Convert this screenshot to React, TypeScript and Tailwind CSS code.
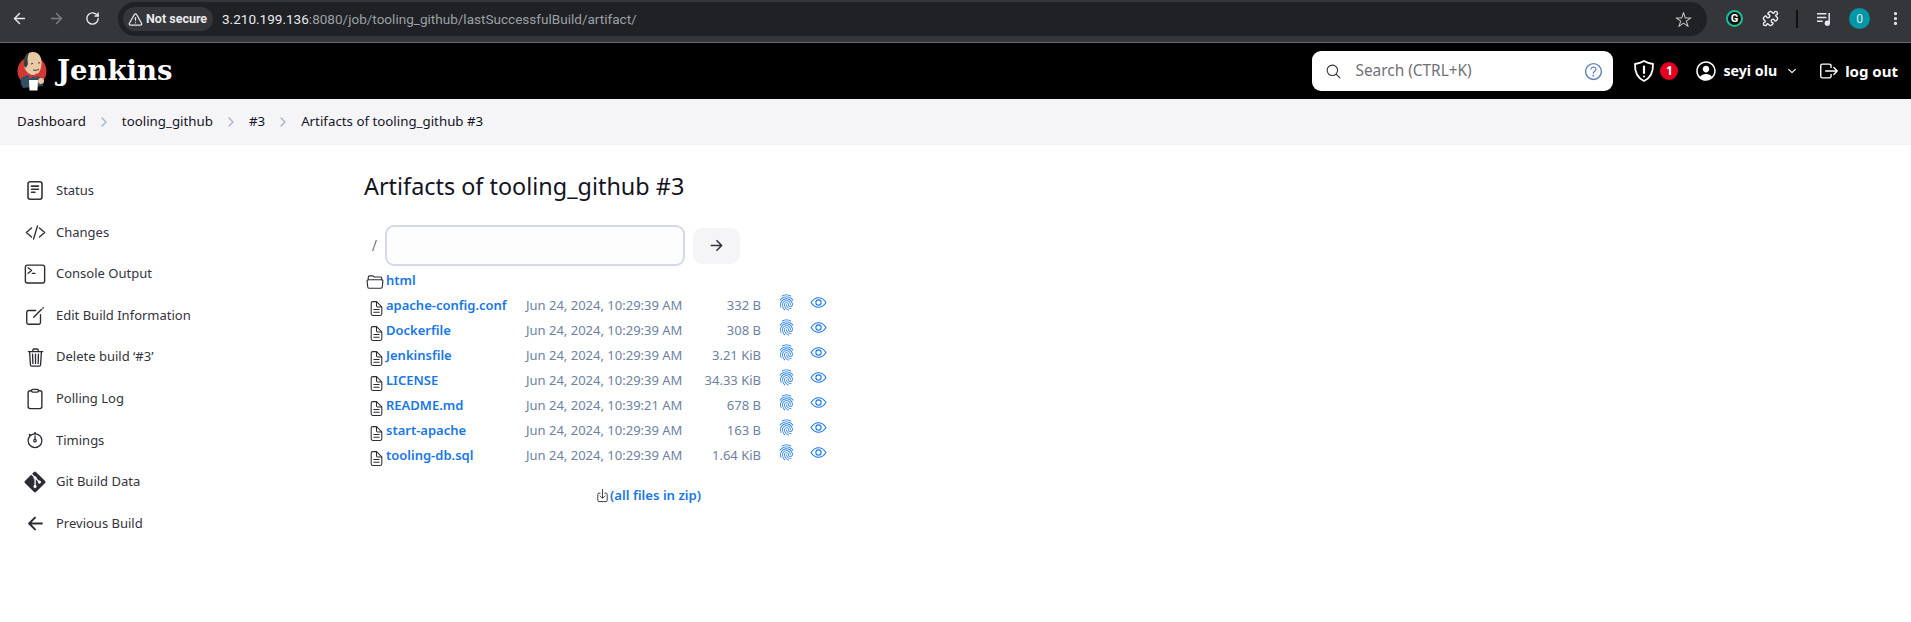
import { ArrowLeft, ArrowRight, Puzzle, RotateCw, TriangleAlert, EllipsisVertical } from "lucide-react"
import { FaGitAlt } from "react-icons/fa"
import {
  IoArrowBackOutline,
  IoArrowForwardOutline,
  IoChevronDownOutline,
  IoChevronForwardOutline,
  IoClipboardOutline,
  IoCodeSlashOutline,
  IoCreateOutline,
  IoDocumentTextOutline,
  IoDownloadOutline,
  IoEyeOutline,
  IoFingerPrintOutline,
  IoFolderOpenOutline,
  IoHelpCircleOutline,
  IoLogOutOutline,
  IoPersonCircleOutline,
  IoSearchOutline,
  IoStarOutline,
  IoStopwatchOutline,
  IoTerminalOutline,
  IoTrashOutline,
} from "react-icons/io5"

const files = [
  { name: "apache-config.conf", date: "Jun 24, 2024, 10:29:39 AM", size: "332 B" },
  { name: "Dockerfile", date: "Jun 24, 2024, 10:29:39 AM", size: "308 B" },
  { name: "Jenkinsfile", date: "Jun 24, 2024, 10:29:39 AM", size: "3.21 KiB" },
  { name: "LICENSE", date: "Jun 24, 2024, 10:29:39 AM", size: "34.33 KiB" },
  { name: "README.md", date: "Jun 24, 2024, 10:39:21 AM", size: "678 B" },
  { name: "start-apache", date: "Jun 24, 2024, 10:29:39 AM", size: "163 B" },
  { name: "tooling-db.sql", date: "Jun 24, 2024, 10:29:39 AM", size: "1.64 KiB" },
]

function StatusIcon() {
  return (
    <svg viewBox="0 0 20 24" className="h-[21px] w-[18px]" fill="none" stroke="#333" strokeWidth="1.8" strokeLinecap="round">
      <rect x="2" y="2" width="16" height="20" rx="2.5" />
      <path d="M6 7h8M6 10.5h8M6 14h4" />
    </svg>
  )
}

function ShieldAlert() {
  return (
    <svg viewBox="0 0 24 24" className="ml-[19px] h-[24px] w-[24px]" fill="none" stroke="#fff" strokeWidth="1.8" strokeLinecap="round" strokeLinejoin="round">
      <path d="M12 2c3 1.800 6 2.600 9 3 .3 8-2.500 14-9 17C5.500 19 2.700 13 3 5c3-.4 6-1.200 9-3z" />
      <path d="M12 7.500v6.500" strokeWidth="2.200" />
      <circle cx="12" cy="17.500" r="1" fill="#fff" stroke="none" />
    </svg>
  )
}

function JenkinsLogo() {
  return (
    <svg viewBox="0 0 30 40" className="h-[40px] w-[30px] shrink-0">
      <circle cx="15" cy="20" r="14.500" fill="#d33833" />
      <path d="M7 15C6 7 10 1 16 1s9 5 8.500 12c-.4 5-2 10-7 11-5 .6-9-3-10.500-9z" fill="#e8c9a6" />
      <path d="M7 15C6 8 8 3 12 2c-2 4-1.500 8-1 11l-2 4z" fill="#3d3d3d" />
      <path d="M14 13l2-.6M21 12l2-.3M16 19c2 .6 4 .3 6-.8" stroke="#4a3226" strokeWidth="1" fill="none" />
      <path d="M4 27c3-2 6-3.500 9-3l6 1c3 .5 5 2 6 5l1 5-20 2c-2-3-3-6-2-10z" fill="#335061" />
      <path d="M11 22l5 3 4-3-1 5-3-1.500-3 2.500z" fill="#d33833" />
      <circle cx="24" cy="30" r="3" fill="#e8c9a6" />
      <path d="M12 29h9l-.5 10.500h-8z" fill="#fff" />
    </svg>
  )
}

function ChromeBar() {
  return (
    <div className="flex h-[43px] items-start border-b border-[#6a6b6e] bg-[#35363a] font-['Roboto',sans-serif] text-[#e8eaed]">
      <div className="flex h-[37px] w-[118px] shrink-0 items-center">
        <ArrowLeft size={17} strokeWidth={2} className="ml-[11px]" />
        <ArrowRight size={17} strokeWidth={2} className="ml-[20px] text-[#7d7f83]" />
        <RotateCw size={15} strokeWidth={2.2} className="ml-[20px]" />
      </div>
      <div className="mt-[2px] flex h-[34px] w-[1589px] shrink-0 items-center rounded-full bg-[#202124] pl-[5px] pr-[15px]">
        <div className="flex h-[24px] w-[90px] items-center rounded-full bg-[#35363a] pl-[5px] text-[12.500px] font-bold">
          <TriangleAlert size={15} className="mr-[3px]" />
          <span>Not secure</span>
        </div>
        <div className="ml-[9px] flex-1 text-[13.560px] text-[#9aa0a6]">
          <span className="text-[#e8eaed]">3.210.199.136</span>:8080/job/tooling_github/lastSuccessfulBuild/artifact/
        </div>
        <IoStarOutline size={17} className="text-[#c4c7c5]" />
      </div>
      <div className="flex h-[37px] flex-1 items-center">
        <div className="ml-[19px] flex h-[17px] w-[17px] items-center justify-center rounded-full border-2 border-[#15c39a] bg-[#111] text-[11px] font-bold leading-none text-white">G</div>
        <Puzzle size={17} className="ml-[19px]" />
        <div className="ml-[17px] h-[18px] w-[2px] bg-[#111]" />
        <svg viewBox="0 0 16 16" className="ml-[19px] h-[15px] w-[15px]" fill="none" stroke="#e8eaed" strokeWidth="1.600">
          <path d="M0 3h10M0 7h10M0 11h6" />
          <path d="M13 2v11" />
          <circle cx="11" cy="13" r="2" fill="#e8eaed" />
        </svg>
        <div className="ml-[17px] flex h-[21px] w-[21px] items-center justify-center rounded-full bg-[#0097a7] text-[12px] text-[#e8eaed]">0</div>
        <EllipsisVertical size={17} strokeWidth={2.500} className="ml-[17px]" />
      </div>
    </div>
  )
}

function TopNav() {
  return (
    <div className="flex h-[56px] items-center bg-black text-white">
      <div className="ml-[17px]">
        <JenkinsLogo />
      </div>
      <span className="ml-[10px] font-['DejaVu_Serif',serif] text-[27.500px] font-bold leading-none">Jenkins</span>
      <div className="ml-auto flex h-[40px] w-[301px] items-center rounded-[9px] bg-white pl-[13px] pr-[8px] text-[#2a2a33]">
        <IoSearchOutline size={17} />
        <span className="ml-[13px] flex-1 text-[15.400px] text-[#6f6f76]">Search (CTRL+K)</span>
        <IoHelpCircleOutline size={23} className="text-[#5c84b8]" />
      </div>
      <ShieldAlert />
      <div className="ml-[4px] flex h-[18px] w-[18px] items-center justify-center rounded-full bg-[#e6001f] text-[12px] font-bold">1</div>
      <IoPersonCircleOutline size={24} className="ml-[16px]" />
      <span className="ml-[5px] text-[14.200px] font-bold">seyi olu</span>
      <IoChevronDownOutline size={12} className="ml-[9px]" />
      <IoLogOutOutline size={22} className="ml-[20px]" />
      <span className="ml-[5px] mr-[13px] text-[15px] font-bold">log out</span>
    </div>
  )
}

function Breadcrumbs() {
  const sep = <IoChevronForwardOutline size={14} className="text-[#a5b2c8]" />
  return (
    <div className="flex h-[46px] items-center gap-[11px] bg-[#f5f5f8] pl-[17px] text-[13.300px] text-[#14141f]">
      <span>Dashboard</span>
      {sep}
      <span>tooling_github</span>
      {sep}
      <span>#3</span>
      {sep}
      <span>Artifacts of tooling_github #3</span>
    </div>
  )
}

function Sidebar() {
  const items = [
    { icon: <StatusIcon />, label: "Status" },
    { icon: <IoCodeSlashOutline size={21} />, label: "Changes" },
    { icon: <IoTerminalOutline size={22} />, label: "Console Output" },
    { icon: <IoCreateOutline size={22} />, label: "Edit Build Information" },
    { icon: <IoTrashOutline size={21} />, label: "Delete build ‘#3’" },
    { icon: <IoClipboardOutline size={22} />, label: "Polling Log" },
    { icon: <IoStopwatchOutline size={20} />, label: "Timings" },
    { icon: <FaGitAlt size={24} />, label: "Git Build Data" },
    { icon: <IoArrowBackOutline size={21} />, label: "Previous Build" },
  ]
  return (
    <div className="w-[364px] shrink-0 pt-[25px]">
      {items.map((item) => (
        <div key={item.label} className="flex h-[41.6px] items-center text-[13px] text-[#33333d]">
          <div className="ml-[23px] flex w-[24px] justify-center text-[#2b2b33]">{item.icon}</div>
          <span className="ml-[9px]">{item.label}</span>
        </div>
      ))}
    </div>
  )
}

function ArtifactRow({ name, date, size }: { name: string; date: string; size: string }) {
  return (
    <div className="flex h-[25px] items-center text-[13px]">
      <IoDocumentTextOutline size={17} className="ml-[4px] mt-[6px] mr-[1px] w-[17px] shrink-0 text-[#2b2b33]" />
      <a className="w-[140px] shrink-0 font-semibold text-[#1877e6]">{name}</a>
      <span className="w-[160px] shrink-0 text-[#6d82a3]">{date}</span>
      <span className="w-[75px] shrink-0 text-right text-[#6d82a3]">{size}</span>
      <IoFingerPrintOutline size={17} className="mb-[6px] ml-[17px] shrink-0 text-[#1877e6]" />
      <IoEyeOutline size={17} className="mb-[6px] ml-[15px] shrink-0 text-[#1877e6]" />
    </div>
  )
}

function Artifacts() {
  return (
    <div className="flex-1 pt-[25px]">
      <h1 className="text-[23.400px] font-normal leading-[33px] text-[#14141f]">Artifacts of tooling_github #3</h1>
      <div className="mt-[22px] flex h-[41px] items-center">
        <span className="ml-[8px] w-[14px] text-[14px] font-light text-[#33333d]">/</span>
        <input className="-ml-px h-[41px] w-[300px] rounded-[9px] border-2 border-[#d3d9e6] bg-[#fdfdfe]" />
        <button className="ml-[8px] flex h-[36px] w-[47px] items-center justify-center rounded-[9px] bg-[#f5f5f8] text-[#33333d]">
          <IoArrowForwardOutline size={17} />
        </button>
      </div>
      <div className="mt-[2px]">
        <div className="flex h-[25px] items-center text-[13px]">
          <IoFolderOpenOutline size={18} className="mt-[3px] ml-[1px] mr-[1px] w-[20px] shrink-0 text-[#2b2b33]" />
          <a className="font-semibold text-[#1877e6]">html</a>
        </div>
        {files.map((file) => (
          <ArtifactRow key={file.name} {...file} />
        ))}
      </div>
      <div className="mt-[15px] flex h-[25px] items-center pl-[231px] text-[13.200px] font-semibold text-[#1877e6]">
        <IoDownloadOutline size={15} className="text-[#33333d]" />
        <a>(all files in zip)</a>
      </div>
    </div>
  )
}

export default function App() {
  return (
    <div className="h-[622px] w-[1911px] overflow-hidden bg-white font-['Noto_Sans','Open_Sans',sans-serif]">
      <ChromeBar />
      <TopNav />
      <Breadcrumbs />
      <div className="flex">
        <Sidebar />
        <Artifacts />
      </div>
    </div>
  )
}
